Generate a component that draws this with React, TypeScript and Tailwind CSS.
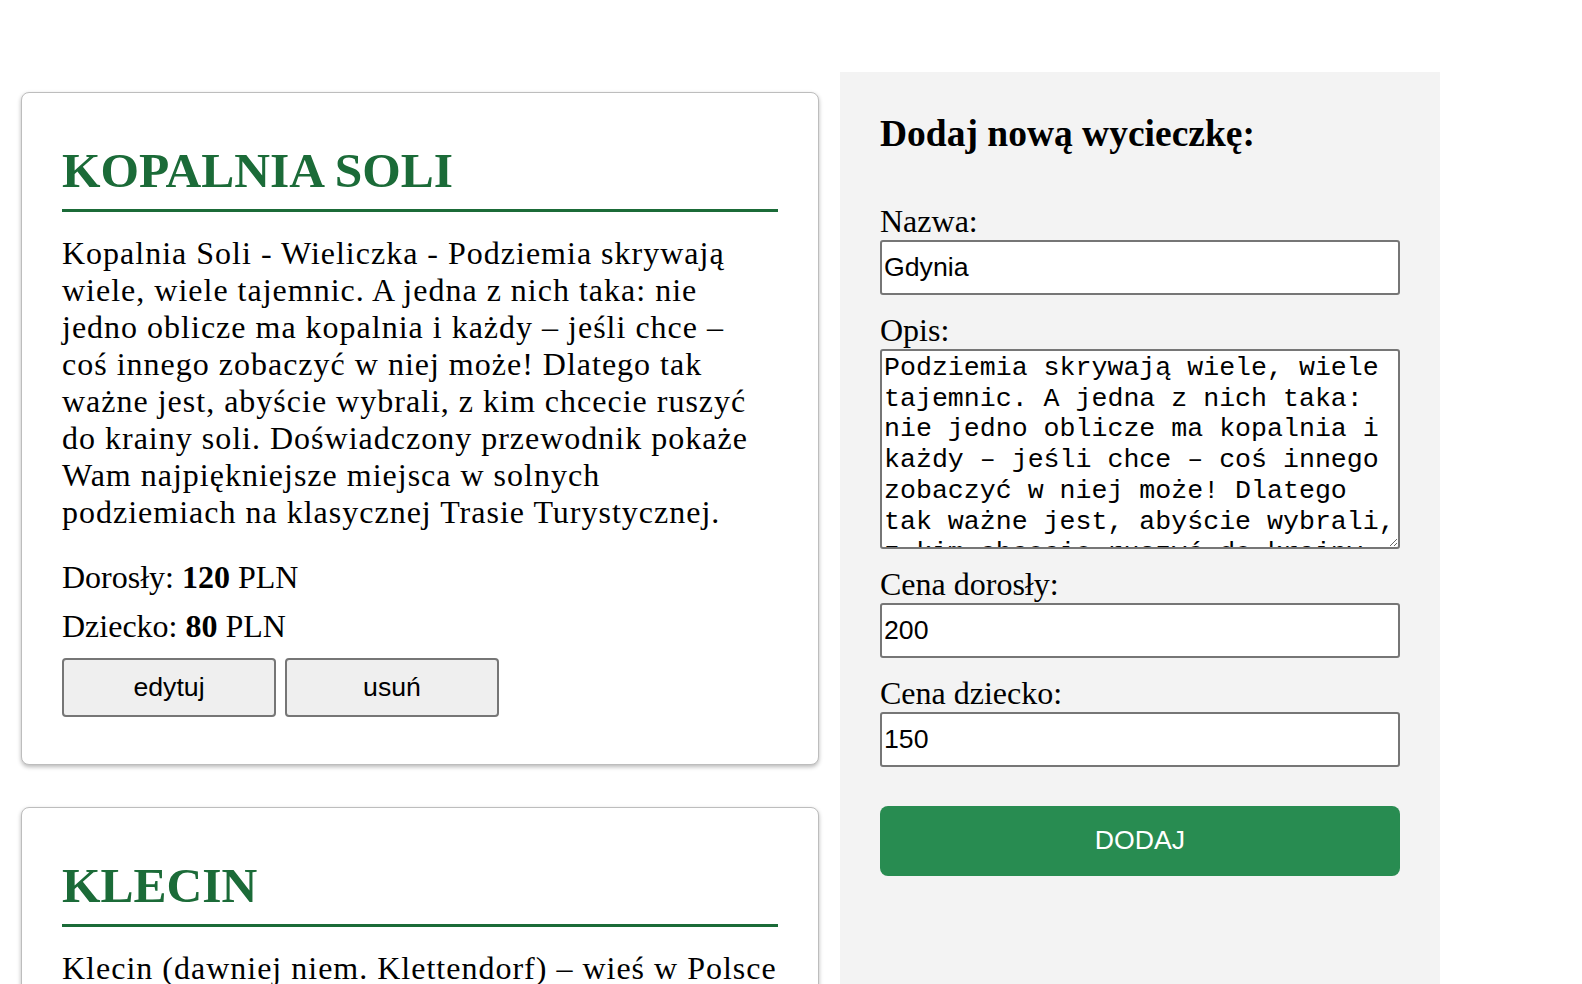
import React from "react";

type Trip = {
  name: string;
  desc: string;
  adult: number;
  child: number;
};

const trips: Trip[] = [
  {
    name: "KOPALNIA SOLI",
    desc: "Kopalnia Soli - Wieliczka - Podziemia skrywają wiele, wiele tajemnic. A jedna z nich taka: nie jedno oblicze ma kopalnia i każdy – jeśli chce – coś innego zobaczyć w niej może! Dlatego tak ważne jest, abyście wybrali, z kim chcecie ruszyć do krainy soli. Doświadczony przewodnik pokaże Wam najpiękniejsze miejsca w solnych podziemiach na klasycznej Trasie Turystycznej.",
    adult: 120,
    child: 80,
  },
  {
    name: "KLECIN",
    desc: "Klecin (dawniej niem. Klettendorf) – wieś w Polsce położona w województwie dolnośląskim, w powiecie wrocławskim, w gminie Kobierzyce. Dawniej samodzielna wieś, obecnie w dużej części włączona w granice Wrocławia.",
    adult: 50,
    child: 30,
  },
];

function TripCard({ trip, first }: { trip: Trip; first: boolean }) {
  return (
    <div
      className={`${first ? "" : "mt-[42px]"} w-[798px] rounded-[8px] border border-[#bdbdbd] bg-white px-[40px] pt-[50px] pb-[47px] shadow-[0_2px_4px_rgba(0,0,0,0.28)]`}
    >
      <h2 className="border-b-[3px] border-[#1b6b38] pb-[11px] text-[49.5px] font-bold leading-[55px] text-[#1b6b38]">
        {trip.name}
      </h2>
      <p className="mt-[23px] text-[32px] leading-[37px] tracking-[1px] text-black">
        {trip.desc}
      </p>
      <p className="mt-[28px] text-[32px] leading-[37px] text-black">
        Dorosły: <b>{trip.adult}</b> PLN
      </p>
      <p className="mt-[12px] text-[32px] leading-[37px] text-black">
        Dziecko: <b>{trip.child}</b> PLN
      </p>
      <div className="mt-[13px] flex">
        <button className="h-[59px] w-[214px] rounded-[4px] border-2 border-[#767676] bg-[#efefef] font-['Liberation_Sans',Arial,sans-serif] text-[26.67px] leading-[31px] text-black">
          edytuj
        </button>
        <button className="ml-[9px] h-[59px] w-[214px] rounded-[4px] border-2 border-[#767676] bg-[#efefef] font-['Liberation_Sans',Arial,sans-serif] text-[26.67px] leading-[31px] text-black">
          usuń
        </button>
      </div>
    </div>
  );
}

const opis =
  "Podziemia skrywają wiele, wiele tajemnic. A jedna z nich taka: nie jedno oblicze ma kopalnia i każdy – jeśli chce – coś innego zobaczyć w niej może! Dlatego tak ważne jest, abyście wybrali, z kim chcecie ruszyć do krainy soli. Doświadczony przewodnik pokaże Wam najpiękniejsze miejsca w solnych podziemiach na klasycznej Trasie Turystycznej.";

export default function App() {
  const inputCls =
    "block h-[55px] w-[520px] rounded-[3px] border-2 border-[#767676] bg-white px-[2px] font-['Liberation_Sans',Arial,sans-serif] text-[26.67px] leading-[31px] text-black outline-none";
  const labelCls = "block text-[32px] leading-[37px] text-black";
  return (
    <div className="min-h-screen bg-white font-['Liberation_Serif','Times_New_Roman',serif]">
      <div className="flex items-stretch pt-[72px] pl-[21px]">
        <div className="w-[798px] shrink-0 pt-[20px] pb-[40px]">
          {trips.map((t, i) => (
            <TripCard key={t.name} trip={t} first={i === 0} />
          ))}
        </div>
        <div className="ml-[21px] w-[600px] shrink-0 bg-[#f3f3f3] px-[40px] pt-[40px]">
          <h2 className="text-[37.5px] font-bold leading-[43px] text-black">
            Dodaj nową wycieczkę:
          </h2>
          <form className="mt-[47.6px]" onSubmit={(e) => e.preventDefault()}>
            <label className={labelCls}>Nazwa:</label>
            <input className={`${inputCls} mb-[17px]`} defaultValue="Gdynia" />
            <label className={labelCls}>Opis:</label>
            <textarea
              className="mb-[17px] block h-[200px] w-[520px] overflow-hidden rounded-[3px] border-2 border-[#767676] bg-white p-[2px] font-['Liberation_Mono','Courier_New',monospace] text-[26.6px] leading-[30.9px] text-black outline-none"
              defaultValue={opis}
            />
            <label className={labelCls}>Cena dorosły:</label>
            <input className={`${inputCls} mb-[17px]`} defaultValue="200" />
            <label className={labelCls}>Cena dziecko:</label>
            <input className={inputCls} defaultValue="150" />
            <button
              type="submit"
              className="mt-[39px] block h-[70px] w-[520px] rounded-[8px] bg-[#288c51] font-['Liberation_Sans',Arial,sans-serif] text-[26.67px] leading-[31px] text-white"
            >
              DODAJ
            </button>
          </form>
        </div>
      </div>
    </div>
  );
}
